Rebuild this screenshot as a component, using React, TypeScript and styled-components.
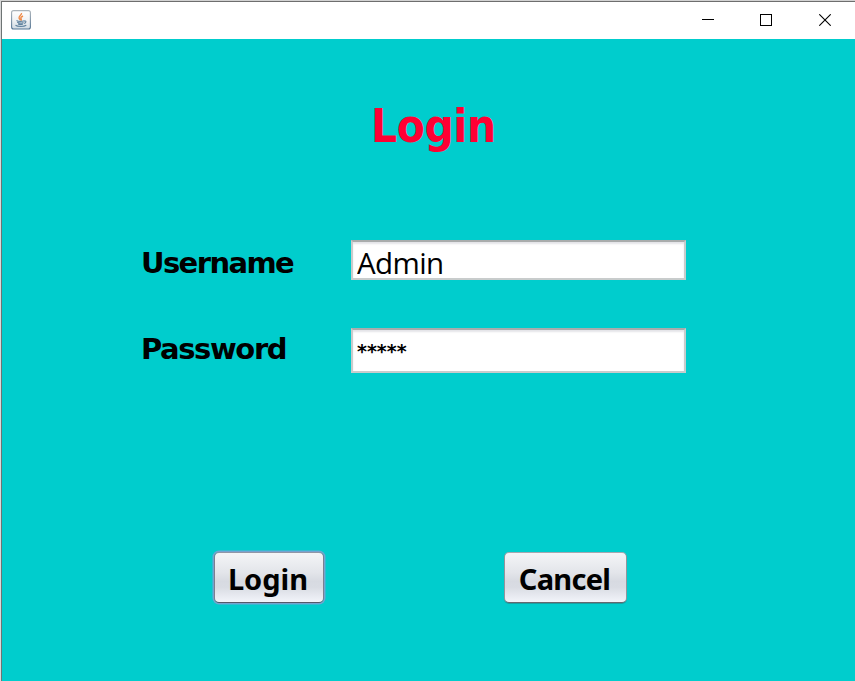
import React from "react";
import styled, { createGlobalStyle } from "styled-components";

const GlobalStyle = createGlobalStyle`
  *, *::before, *::after { box-sizing: border-box; }
  html, body { margin: 0; padding: 0; overflow: hidden; background: #d8d8d8; }
`;

const Frame = styled.div`
  width: 855px;
  height: 681px;
  display: flex;
  flex-direction: column;
  border-top: 1px solid #d2d2d2;
  border-left: 1px solid #d9d9d9;
  font-family: "Noto Sans", "Open Sans", sans-serif;
  color: #000;
`;

const Window = styled.div`
  flex: 1;
  display: flex;
  flex-direction: column;
  border-top: 1px solid #6e6e6e;
  border-left: 1px solid #6e7474;
  background: #00cdcd;
`;

const TitleBar = styled.header`
  height: 37px;
  display: flex;
  align-items: center;
  justify-content: space-between;
  padding: 0 1px 2px 9px;
  background: #fff;
`;

const WindowControls = styled.div`
  display: flex;
  height: 35px;
`;

const ControlButton = styled.button`
  width: 58.5px;
  height: 35px;
  padding: 0;
  border: 0;
  background: transparent;
  display: grid;
  place-items: center;
  svg { display: block; }
`;

const Content = styled.main`
  flex: 1;
  display: flex;
  flex-direction: column;
`;

const Title = styled.h1`
  margin: 55px 0 0 369px;
  height: 66px;
  line-height: 66px;
  font-family: "DejaVu Sans Condensed", "DejaVu Sans", sans-serif;
  font-stretch: condensed;
  font-size: 45.5px;
  font-weight: 700;
  letter-spacing: -0.4px;
  color: #ff0033;
  white-space: nowrap;
`;

const Form = styled.form`
  margin: 80px 0 0 139px;
  display: grid;
  grid-template-columns: 210px 335px;
  grid-template-rows: 40px 45px;
  row-gap: 48px;
`;

const Label = styled.label<{ $spacing: number; $lift?: number }>`
  height: 46px;
  line-height: 46px;
  margin-top: ${({ $lift = 0 }) => -$lift}px;
  font-family: "DejaVu Sans", sans-serif;
  font-size: 29px;
  font-weight: 700;
  letter-spacing: ${({ $spacing }) => $spacing}px;
  white-space: nowrap;
`;

const Field = styled.input<{ $masked?: boolean }>`
  width: 335px;
  height: 100%;
  margin: 0;
  padding: ${({ $masked }) => ($masked ? "1px 4px 0" : "4px 4px 0")};
  border: 2px solid #c8cccc;
  border-top: 2px solid #a9acac;
  border-radius: 0;
  outline: none;
  background: #fff;
  box-shadow: inset 0 2px 2px #e4e4e8;
  color: #000;
  font-family: ${({ $masked }) =>
    $masked ? '"DejaVu Sans", sans-serif' : '"Open Sans", "Noto Sans", sans-serif'};
  font-size: ${({ $masked }) => ($masked ? "19px" : "29.5px")};
  font-weight: ${({ $masked }) => ($masked ? 700 : 400)};
  letter-spacing: ${({ $masked }) => ($masked ? "0" : "-0.6px")};
`;

const Actions = styled.div`
  margin: 179px 0 0 212px;
  display: flex;
  gap: 180px;
`;

const ActionButton = styled.button<{ $width: number; $focused?: boolean; $spacing: number }>`
  width: ${({ $width }) => $width}px;
  height: 51px;
  padding: 3px 2px 0 0;
  border: 1px solid;
  border-color: ${({ $focused }) =>
    $focused ? "#9296a6 #7b8090 #555968" : "#a5a8b0 #92959c #65686f"};
  border-radius: 5px;
  background: linear-gradient(#f4f5f7 0%, #e3e5ea 40%, #d7dae1 58%, #d9dce3 70%, #f2f4fa 100%);
  box-shadow: ${({ $focused }) =>
    $focused ? "0 0 0 1.5px #73a4d1" : "0 1px 0 #189fa2"};
  color: #000;
  font-family: "Noto Sans", "Open Sans", sans-serif;
  font-size: 29px;
  font-weight: 700;
  line-height: 44px;
  letter-spacing: ${({ $spacing }) => $spacing}px;
  white-space: nowrap;
`;

const JavaIcon = () => (
  <svg width="20" height="20" viewBox="0 0 20 20" fill="none">
    <defs>
      <linearGradient id="tile" x1="0" y1="0" x2="0" y2="1">
        <stop offset="0" stopColor="#fff" />
        <stop offset="0.5" stopColor="#f1f3f5" />
        <stop offset="1" stopColor="#cfdae3" />
      </linearGradient>
      <linearGradient id="edge" x1="0" y1="0" x2="0" y2="1">
        <stop offset="0" stopColor="#abb3b9" />
        <stop offset="1" stopColor="#547594" />
      </linearGradient>
    </defs>
    <rect x="0.6" y="0.6" width="18.8" height="18.4" rx="2" fill="url(#tile)" stroke="url(#edge)" strokeWidth="1.1" />
    <path d="M10.5 3c.5 2.2-3 3-2.4 5 .2.9 1 1.4 1.2 2.2M12 6c-2.5 1.2-2.5 2-1.8 3 .4.7.2 1.1-.4 1.7" stroke="#ef8b49" strokeWidth="1.4" />
    <path d="M5.5 10.5c1.7 1 6 .8 8 .2M6.2 12.3c1.8.9 4.8.8 6.3.2M7 14.1c1.5.6 3.7.6 5 0M13 11.2c2.6-.9 2.6 1.8-.2 2.3M4.5 15.3c2 1.5 8.5 1.5 10.8 0" stroke="#61839f" strokeWidth="1.1" />
  </svg>
);

const MinimizeIcon = () => (
  <svg width="12" height="12" shapeRendering="crispEdges"><path d="M0 5.5h12" stroke="#000" /></svg>
);
const MaximizeIcon = () => (
  <svg width="12" height="12" shapeRendering="crispEdges"><rect x=".5" y=".5" width="11" height="11" fill="none" stroke="#000" /></svg>
);
const CloseIcon = () => (
  <svg width="12" height="12"><path d="M.3.3l11.4 11.4M11.7.3L.3 11.7" stroke="#000" strokeWidth="1.1" /></svg>
);

export default function App() {
  return (
    <>
      <GlobalStyle />
      <Frame>
        <Window>
          <TitleBar>
            <JavaIcon />
            <WindowControls>
              <ControlButton aria-label="Minimize"><MinimizeIcon /></ControlButton>
              <ControlButton aria-label="Maximize"><MaximizeIcon /></ControlButton>
              <ControlButton aria-label="Close"><CloseIcon /></ControlButton>
            </WindowControls>
          </TitleBar>
          <Content>
            <Title>Login</Title>
            <Form>
              <Label htmlFor="username" $spacing={-1.6}>Username</Label>
              <Field id="username" defaultValue="Admin" />
              <Label htmlFor="password" $spacing={-1.4} $lift={2}>Password</Label>
              <Field id="password" defaultValue="*****" $masked />
            </Form>
            <Actions>
              <ActionButton $width={110} $focused $spacing={0}>Login</ActionButton>
              <ActionButton $width={123} $spacing={-0.7}>Cancel</ActionButton>
            </Actions>
          </Content>
        </Window>
      </Frame>
    </>
  );
}
